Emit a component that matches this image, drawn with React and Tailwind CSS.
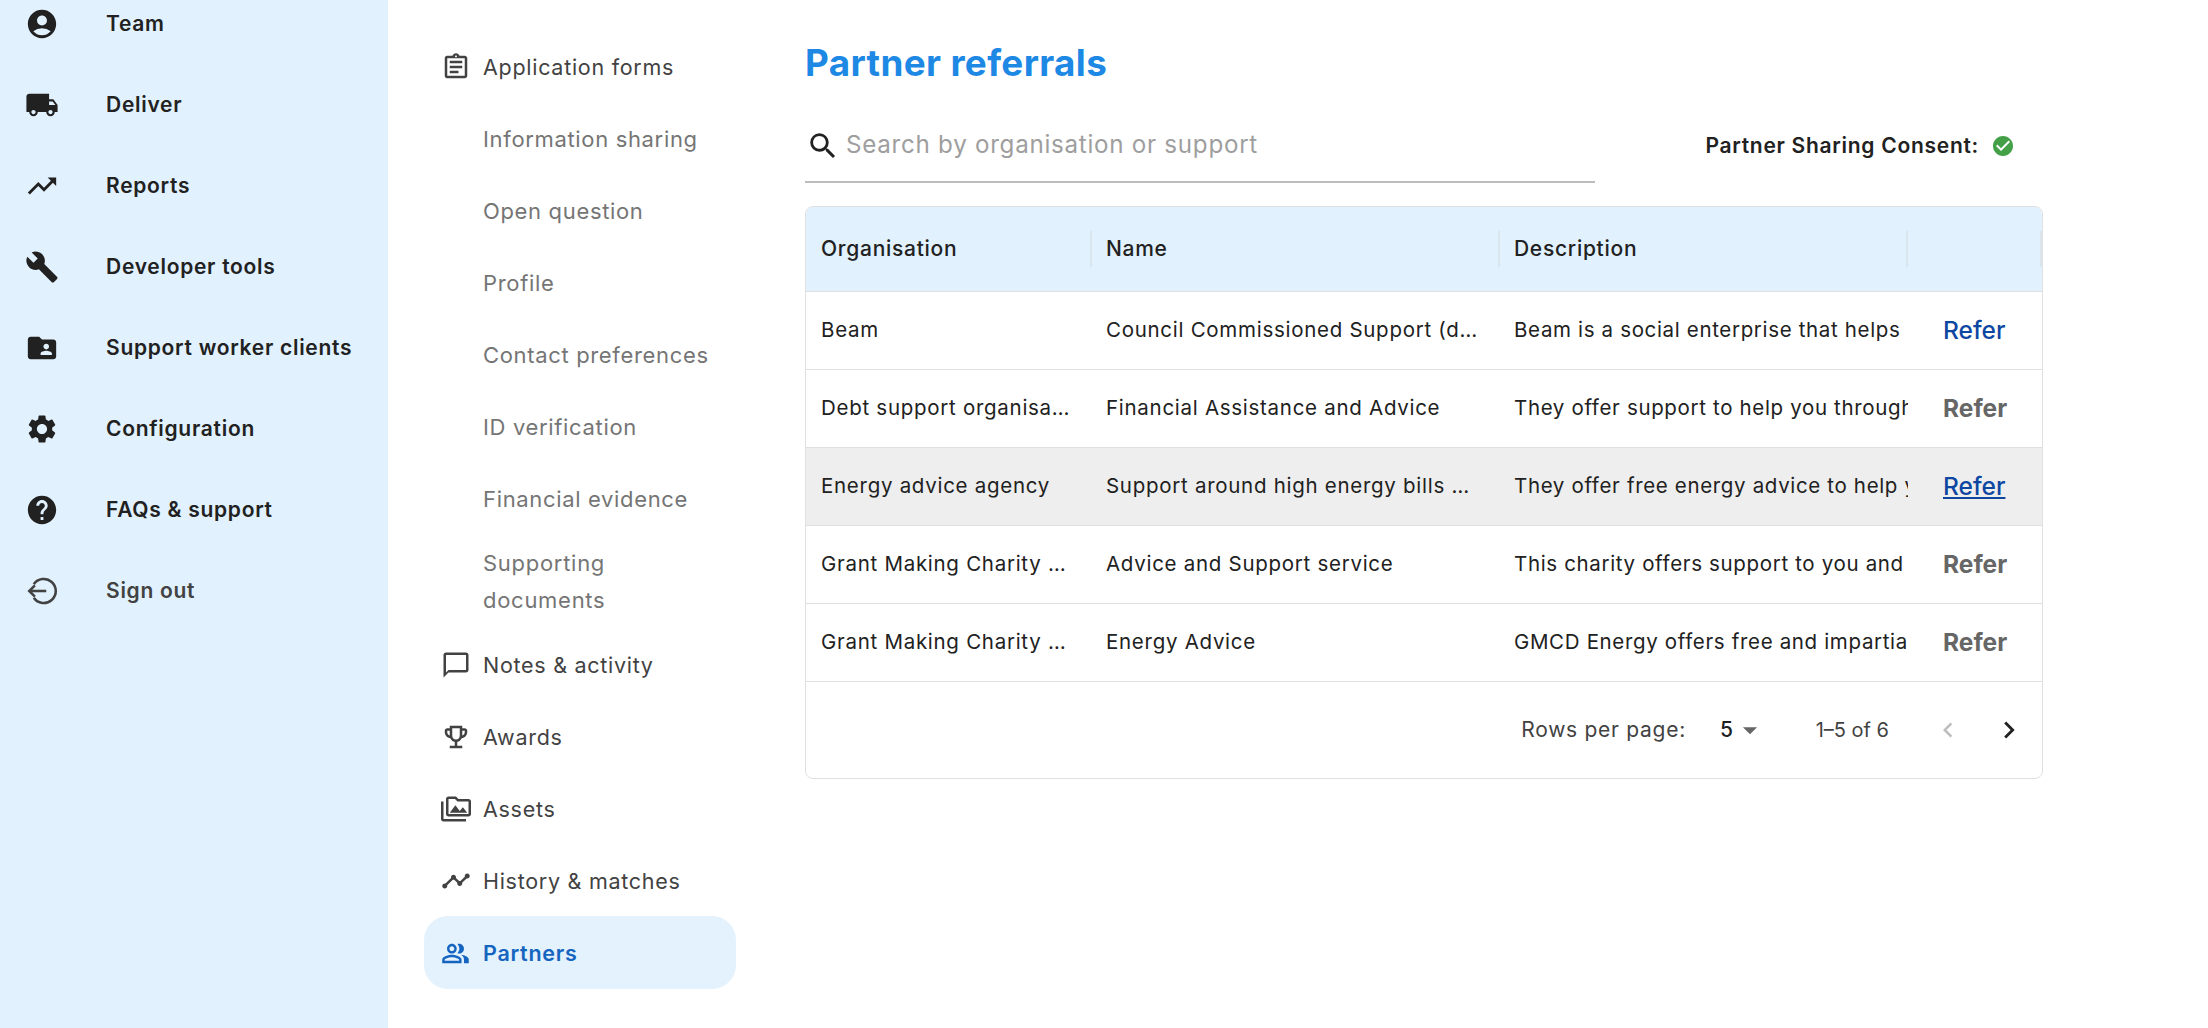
import {
  MdAccountCircle,
  MdLocalShipping,
  MdTrendingUp,
  MdBuild,
  MdFolderShared,
  MdSettings,
  MdHelp,
  MdOutlineAssignment,
  MdChatBubbleOutline,
  MdOutlineEmojiEvents,
  MdOutlinePermMedia,
  MdTimeline,
  MdOutlinePeopleAlt,
  MdSearch,
  MdCheckCircle,
  MdChevronLeft,
  MdChevronRight,
  MdArrowDropDown,
} from 'react-icons/md';

function SignOutIcon({ className }) {
  return (
    <svg viewBox="0 0 24 24" className={className} fill="none" stroke="currentColor" strokeWidth="1.8">
      <path d="M6.2 7.2A8.5 8.5 0 1 1 6.2 16.8" />
      <path d="M15 12H3.5" />
      <path d="M7 8l-4 4 4 4" />
    </svg>
  );
}

const mainNav = [
  { label: 'Team', icon: MdAccountCircle },
  { label: 'Deliver', icon: MdLocalShipping },
  { label: 'Reports', icon: MdTrendingUp },
  { label: 'Developer tools', icon: MdBuild },
  { label: 'Support worker clients', icon: MdFolderShared },
  { label: 'Configuration', icon: MdSettings },
  { label: 'FAQs & support', icon: MdHelp },
  { label: 'Sign out', icon: SignOutIcon, muted: true },
];

const subNav = ['Information sharing', 'Open question', 'Profile', 'Contact preferences', 'ID verification', 'Financial evidence'];

const lowerNav = [
  { label: 'Notes & activity', icon: MdChatBubbleOutline },
  { label: 'Awards', icon: MdOutlineEmojiEvents },
  { label: 'Assets', icon: MdOutlinePermMedia },
  { label: 'History & matches', icon: MdTimeline },
];

const rows = [
  {
    org: 'Beam',
    name: 'Council Commissioned Support (deliver)',
    desc: 'Beam is a social enterprise that helps',
    refer: 'active',
  },
  {
    org: 'Debt support organisation',
    name: 'Financial Assistance and Advice',
    desc: 'They offer support to help you through',
    refer: 'off',
  },
  {
    org: 'Energy advice agency',
    name: 'Support around high energy bills …',
    desc: 'They offer free energy advice to help you',
    refer: 'hover',
    hover: true,
  },
  {
    org: 'Grant Making Charity Delivery',
    name: 'Advice and Support service',
    desc: 'This charity offers support to you and',
    refer: 'off',
  },
  {
    org: 'Grant Making Charity Delivery',
    name: 'Energy Advice',
    desc: 'GMCD Energy offers free and impartial',
    refer: 'off',
  },
];

function Refer({ state }) {
  if (state === 'off') return <span className="font-bold text-[#666666]">Refer</span>;
  return <span className={`font-medium text-[#0d47a1] ${state === 'hover' ? 'underline' : ''}`}>Refer</span>;
}

function HeadCell({ children, className = 'pl-[14px]' }) {
  return (
    <th className="p-0 font-medium text-left text-[21px]">
      <div className="flex items-center">
        <span className={`flex-1 ${className}`}>{children}</span>
        <span className="w-[2px] h-[36px] bg-[#dbe5ec]" />
      </div>
    </th>
  );
}

export default function App() {
  return (
    <div className="flex h-[1028px] overflow-hidden bg-white font-['Inter',sans-serif] text-[20.5px] tracking-[0.035em] text-[#212121]">
      <aside className="w-[388px] shrink-0 bg-[#e1f1fd] -mt-[17px] text-[21px]">
        {mainNav.map(({ label, icon: Icon, muted }) => (
          <div key={label} className="flex items-center h-[81px] pl-[25px]">
            <Icon className={`w-[34px] h-[34px] ${muted ? 'text-[#424242]' : 'text-[#212121]'}`} />
            <span className={`ml-[47px] font-semibold ${muted ? 'text-[#424242]' : ''}`}>{label}</span>
          </div>
        ))}
      </aside>

      <nav className="w-[348px] shrink-0 ml-9 pt-[30px] text-[21.5px]">
        <div className="flex items-center h-[72px] pl-5 pt-[2px] text-[#424242]">
          <MdOutlineAssignment className="w-[30px] h-[30px] mr-[12px] -ml-[3px]" />
          Application forms
        </div>
        {subNav.map((label) => (
          <div key={label} className="flex items-center h-[72px] pl-[59px] pt-[2px] text-[22px] tracking-[0.03em] text-[#757575]">
            {label}
          </div>
        ))}
        <div className="flex items-center h-[94px] pl-[59px] pt-[2px] text-[22px] leading-[37px] text-[#757575]">
          <span className="max-w-[200px]">Supporting documents</span>
        </div>
        {lowerNav.map(({ label, icon: Icon }) => (
          <div key={label} className="flex items-center h-[72px] pl-5 pt-[2px] text-[#424242]">
            <Icon className="w-[30px] h-[30px] mr-[12px] -ml-[3px]" />
            {label}
          </div>
        ))}
        <div className="flex items-center h-[73px] w-[312px] pl-5 pt-[2px] rounded-[24px] bg-[#e3f2fd] font-semibold text-[#1565c0]">
          <MdOutlinePeopleAlt className="w-[29px] h-[29px] mr-[13px] -ml-[3px]" />
          Partners
        </div>
      </nav>

      <main className="w-[1238px] ml-[33px] pt-[38px]">
        <h1 className="text-[36.8px] leading-[50px] font-bold tracking-[0.01em] text-[#1e88e5]">Partner referrals</h1>

        <div className="flex items-center justify-between mt-[25px] pr-[28px]">
          <div className="flex items-center w-[790px] h-[70px] pb-[3px] pl-[1px] border-b-2 border-[#bdbdbd]">
            <MdSearch className="w-[34px] h-[34px] text-[#212121]" />
            <span className="ml-[6px] text-[#9e9e9e] text-[24.2px]">Search by organisation or support</span>
          </div>
          <div className="flex items-center mb-[5px] font-semibold text-[21px]">
            Partner Sharing Consent:
            <MdCheckCircle className="w-[24px] h-[24px] ml-[12px] text-[#43a047]" />
          </div>
        </div>

        <div className="w-[1238px] mt-[23px] rounded-lg border border-[#e0e0e0] overflow-hidden">
          <table className="w-full table-fixed border-collapse">
            <colgroup>
              <col className="w-[286px]" />
              <col className="w-[408px]" />
              <col className="w-[408px]" />
              <col />
            </colgroup>
            <thead>
              <tr className="h-[84px] bg-[#e1f1fd] border-b border-[#e0e0e0]">
                <HeadCell className="pl-[15px]">Organisation</HeadCell>
                <HeadCell>Name</HeadCell>
                <HeadCell>Description</HeadCell>
                <HeadCell />
              </tr>
            </thead>
            <tbody>
              {rows.map((row, i) => (
                <tr key={i} className={`h-[78px] border-b border-[#e0e0e0] ${row.hover ? 'bg-[#eeeeee]' : ''}`}>
                  <td className="pl-[15px] pr-5 truncate">{row.org}</td>
                  <td className="pl-[14px] pr-[14px] truncate">{row.name}</td>
                  <td className="pl-[14px] overflow-hidden whitespace-nowrap tracking-[0.032em]">{row.desc}</td>
                  <td className="pl-[35px] text-[24.5px] leading-none tracking-normal">
                    <Refer state={row.refer} />
                  </td>
                </tr>
              ))}
            </tbody>
          </table>
          <div className="flex items-center justify-end h-[96px] pr-[16px] text-[21px] text-[#424242]">
            <span>Rows per page:</span>
            <span className="ml-[34px] text-[#212121] font-medium">5</span>
            <MdArrowDropDown className="w-[34px] h-[34px] -ml-[1px] text-[#666666]" />
            <span className="ml-[49px] text-[20px] tracking-normal">1–5 of 6</span>
            <MdChevronLeft className="w-[30px] h-[30px] ml-[44px] text-[#bdbdbd]" />
            <MdChevronRight className="w-[34px] h-[34px] ml-[29px] text-[#212121]" />
          </div>
        </div>
      </main>
    </div>
  );
}
